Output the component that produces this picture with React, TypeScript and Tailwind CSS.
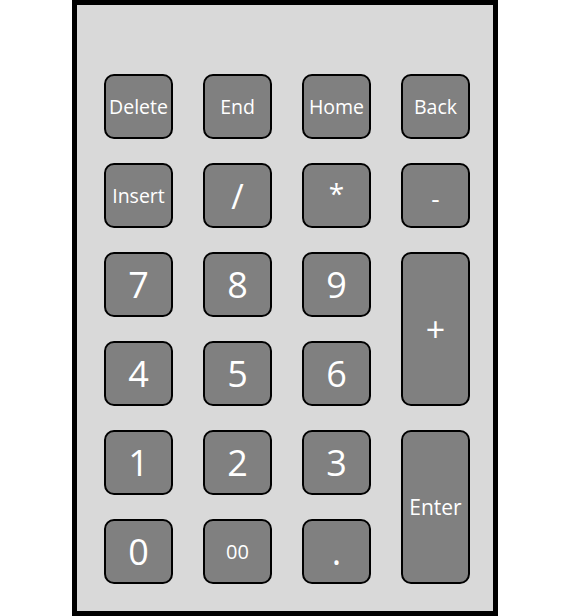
import React from 'react';

type Key = {
  label: string;
  size: string;
  tall?: boolean;
};

const keys: Key[] = [
  { label: 'Delete', size: 'text-[19.5px]' },
  { label: 'End', size: 'text-[19.5px]' },
  { label: 'Home', size: 'text-[19.5px]' },
  { label: 'Back', size: 'text-[19.5px]' },
  { label: 'Insert', size: 'text-[19.5px]' },
  { label: '/', size: 'text-[34px]' },
  { label: '*', size: 'text-[28px] pb-[6px]' },
  { label: '-', size: 'text-[26px] pt-[4px]' },
  { label: '7', size: 'text-[36px]' },
  { label: '8', size: 'text-[36px]' },
  { label: '9', size: 'text-[36px]' },
  { label: '+', size: 'text-[34px]', tall: true },
  { label: '4', size: 'text-[36px]' },
  { label: '5', size: 'text-[36px]' },
  { label: '6', size: 'text-[36px]' },
  { label: '1', size: 'text-[36px]' },
  { label: '2', size: 'text-[36px]' },
  { label: '3', size: 'text-[36px]' },
  { label: 'Enter', size: 'text-[21px]', tall: true },
  { label: '0', size: 'text-[36px]' },
  { label: '00', size: 'text-[20px]' },
  { label: '.', size: 'text-[36px]' },
];

export default function App() {
  return (
    <div className="min-h-screen bg-white font-['Open_Sans','Noto_Sans',sans-serif]">
      <div className="ml-[72px] w-[426px] h-[616px] border-[5px] border-black bg-[#d9d9d9] pt-[69px] pl-[27px]">
        <div className="grid grid-cols-[repeat(4,69px)] grid-rows-[repeat(6,65px)] gap-x-[30px] gap-y-[24px]">
          {keys.map((k) => (
            <div
              key={k.label}
              className={`flex items-center justify-center rounded-[10px] border-2 border-black bg-[#808080] text-white leading-none ${k.size} ${k.tall ? 'row-span-2' : ''}`}
            >
              {k.label}
            </div>
          ))}
        </div>
      </div>
    </div>
  );
}
